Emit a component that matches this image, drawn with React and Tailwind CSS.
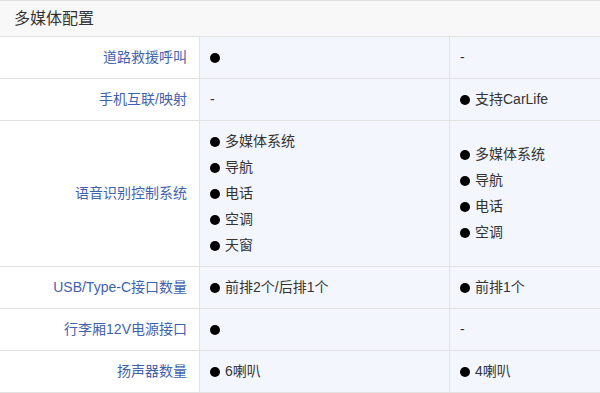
const rows = [
  { label: "道路救援呼叫", a: [{ dot: true, text: "" }], b: "-" },
  { label: "手机互联/映射", a: "-", b: [{ dot: true, text: "支持CarLife" }] },
  {
    label: "语音识别控制系统",
    a: ["多媒体系统", "导航", "电话", "空调", "天窗"].map((t) => ({ dot: true, text: t })),
    b: ["多媒体系统", "导航", "电话", "空调"].map((t) => ({ dot: true, text: t })),
    tall: true,
  },
  { label: "USB/Type-C接口数量", a: [{ dot: true, text: "前排2个/后排1个" }], b: [{ dot: true, text: "前排1个" }] },
  { label: "行李厢12V电源接口", a: [{ dot: true, text: "" }], b: "-" },
  { label: "扬声器数量", a: [{ dot: true, text: "6喇叭" }], b: [{ dot: true, text: "4喇叭" }] },
];

function Value({ value }) {
  if (typeof value === "string") {
    return <span>{value}</span>;
  }
  return (
    <div className="flex flex-col">
      {value.map((item, i) => (
        <div key={i} className="flex h-[26px] items-center gap-[5px]">
          <span className="h-[10px] w-[10px] shrink-0 rounded-full bg-black" />
          {item.text && <span>{item.text}</span>}
        </div>
      ))}
    </div>
  );
}

export default function App() {
  return (
    <div
      className="w-[600px] bg-white text-[14px] text-[#333]"
      style={{ fontFamily: '"Liberation Sans", "Noto Sans CJK SC", sans-serif' }}
    >
      <div className="flex h-[37px] items-center border-y border-[#e2e2e2] bg-[#f8f8f8] pl-[14px] text-[16px] text-[#333]">
        多媒体配置
      </div>
      {rows.map((row, i) => (
        <div
          key={i}
          className={`grid grid-cols-[200px_250px_1fr] border-b border-[#e2e2e2] ${
            row.tall ? "h-[146px]" : "h-[42px]"
          }`}
        >
          <div className="flex items-center justify-end border-r border-[#e2e2e2] pr-[12px] text-[#3f62ad]">
            {row.label}
          </div>
          <div className="flex items-center border-r border-[#e2e2e2] bg-[#f3f6fc] pl-[10px]">
            <Value value={row.a} />
          </div>
          <div className="flex items-center bg-[#f3f6fc] pl-[10px]">
            <Value value={row.b} />
          </div>
        </div>
      ))}
    </div>
  );
}
